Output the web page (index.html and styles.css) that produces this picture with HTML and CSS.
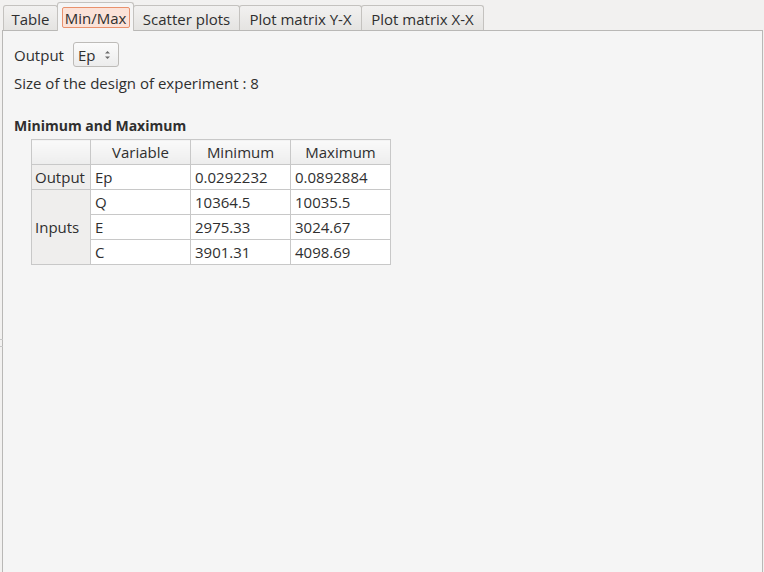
FILE: index.html
```html
<!DOCTYPE html>
<html>
<head>
<meta charset="utf-8">
<link rel="stylesheet" href="styles.css">
</head>
<body>
<div class="window">
  <div class="tabbar">
    <div class="tab t-table">Table</div>
    <div class="tab selected"><span class="focus">Min/Max</span></div>
    <div class="tab t-scatter">Scatter plots</div>
    <div class="tab t-yx">Plot matrix Y-X</div>
    <div class="tab t-xx">Plot matrix X-X</div>
  </div>
  <div class="pane">
    <div class="row-output">
      <span>Output</span>
      <div class="spin"><span>Ep</span>
        <svg class="arrows" width="7" height="12" viewBox="0 0 7 12"><path d="M1 4.5 L3.5 2 L6 4.5 Z" fill="#6a6a6a"/><path d="M1 7.5 L3.5 10 L6 7.5 Z" fill="#6a6a6a"/></svg>
      </div>
    </div>
    <div class="size">Size of the design of experiment : 8</div>
    <div class="title">Minimum and Maximum</div>
    <table class="grid">
      <tr class="head"><th class="corner"></th><th>Variable</th><th>Minimum</th><th class="last">Maximum</th></tr>
      <tr><th class="vh">Output</th><td>Ep</td><td>0.0292232</td><td>0.0892884</td></tr>
      <tr><th class="vh" rowspan="3">Inputs</th><td>Q</td><td>10364.5</td><td>10035.5</td></tr>
      <tr><td>E</td><td>2975.33</td><td>3024.67</td></tr>
      <tr><td>C</td><td>3901.31</td><td>4098.69</td></tr>
    </table>
  </div>
  <div class="handle"></div>
</div>
</body>
</html>
```
FILE: styles.css
```css
html, body {
  margin: 0;
  padding: 0;
  background: #f2f1f0;
}
body {
  font-family: "Open Sans", "DejaVu Sans", sans-serif;
  font-size: 15px;
  color: #2f2f2f;
  width: 764px;
  height: 572px;
  overflow: hidden;
}
.window {
  position: relative;
  height: 572px;
  display: flex;
  flex-direction: column;
}
.tabbar {
  display: flex;
  align-items: flex-end;
  padding-left: 3px;
  height: 31px;
  box-sizing: border-box;
}
.tab {
  height: 26px;
  box-sizing: border-box;
  border: 1px solid #c4c2bf;
  border-bottom: none;
  border-radius: 3px 3px 0 0;
  background: linear-gradient(#f2f1f0, #e4e3e1);
  display: flex;
  align-items: center;
  justify-content: center;
  margin-right: -1px;
  white-space: nowrap;
}
.t-table { width: 55px; }
.t-scatter { width: 107px; }
.t-yx { width: 123px; }
.t-xx { width: 123px; }
.tab.selected {
  width: 77px;
  height: 29px;
  background: #f5f5f5;
  position: relative;
  z-index: 1;
  padding-top: 1px;
}
.focus {
  width: 68px;
  height: 21px;
  box-sizing: border-box;
  border: 1px solid #e9916d;
  background: #fbe2d8;
  border-radius: 2px;
  display: flex;
  align-items: center;
  justify-content: center;
}
.pane {
  flex: 1;
  margin: -1px 1px 0 2px;
  border: 1px solid #b9b8b6;
  border-bottom: none;
  background: #f5f5f5;
  padding: 11px 0 0 11px;
}
.row-output {
  display: flex;
  align-items: center;
  gap: 9px;
  height: 25px;
}
.spin {
  width: 46px;
  height: 25px;
  box-sizing: border-box;
  border: 1px solid #bdbbb8;
  border-radius: 3px;
  background: linear-gradient(#fbfbfb, #ececec);
  display: flex;
  align-items: center;
  justify-content: space-between;
  padding: 0 7px 0 4px;
}
.size {
  margin-top: 6px;
  height: 20px;
  line-height: 20px;
}
.title {
  margin-top: 23px;
  font-weight: bold;
  font-size: 14px;
  line-height: 20px;
}
.grid {
  margin-left: 17px;
  margin-top: 3px;
  border-collapse: collapse;
  border: 1px solid #c4c4c4;
}
.grid td, .grid th {
  height: 25px;
  padding: 0 4px;
  border: 1px solid #c8c8c8;
  box-sizing: border-box;
  text-align: left;
  font-weight: normal;
  white-space: nowrap;
}
.grid td {
  background: #ffffff;
  width: 100px;
}
.grid tr.head th {
  background: linear-gradient(#fafafa, #ededed);
  text-align: center;
}
.grid th.corner {
  width: 59px;
}
.grid tr.head th.last {
  width: 99px;
}
.grid th.vh {
  background: #efeeed;
  padding: 0 3px;
}
.handle {
  position: absolute;
  left: 0;
  top: 339px;
  width: 3px;
  height: 6px;
  border-top: 1px solid #c8c8c8;
  border-bottom: 1px solid #c8c8c8;
}
```
